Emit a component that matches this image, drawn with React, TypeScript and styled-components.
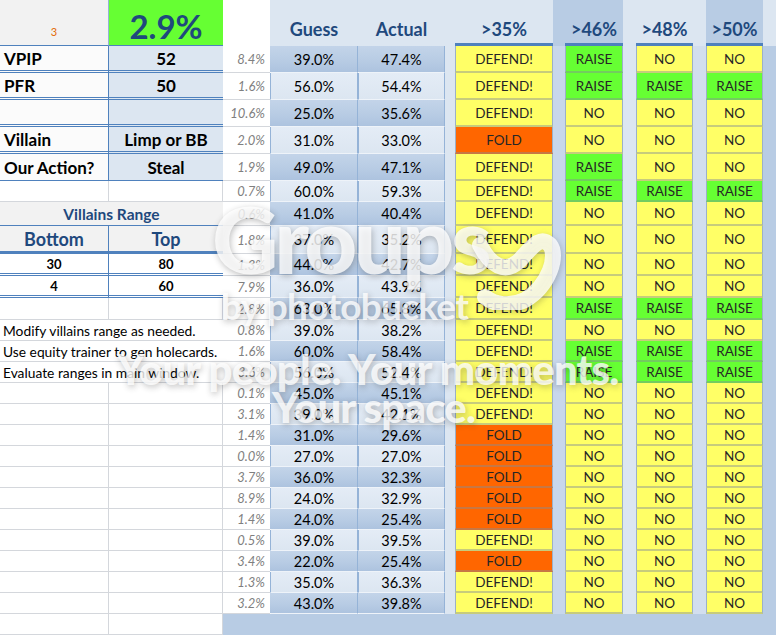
import React from "react";
import styled, { createGlobalStyle, css } from "styled-components";

const colors = {
  navy: "#1f497d",
  accent: "#4f81bd",
  light: "#dce6f1",
  mid: "#b8cce4",
  midSoft: "#c8d7eb",
  edge: "#95b3d7",
  grid: "#d4d7dc",
  paper: "#f2f2f2",
  green: "#66ff33",
  yellow: "#ffff66",
  orange: "#ff6600",
};

const COLUMNS =
  "109px 114px 47px 88px 87px 10px 98px 12px 58px 13px 57px 13px 57px 13px";

type Call = "DEFEND!" | "FOLD" | "RAISE" | "NO";

type Hand = {
  diff: string;
  guess: string;
  actual: string;
  first: Call;
  rest: string; // R = RAISE, N = NO for the three raise columns
};

const hands: Hand[] = [
  { diff: "8.4%", guess: "39.0%", actual: "47.4%", first: "DEFEND!", rest: "RNN" },
  { diff: "1.6%", guess: "56.0%", actual: "54.4%", first: "DEFEND!", rest: "RRR" },
  { diff: "10.6%", guess: "25.0%", actual: "35.6%", first: "DEFEND!", rest: "NNN" },
  { diff: "2.0%", guess: "31.0%", actual: "33.0%", first: "FOLD", rest: "NNN" },
  { diff: "1.9%", guess: "49.0%", actual: "47.1%", first: "DEFEND!", rest: "RNN" },
  { diff: "0.7%", guess: "60.0%", actual: "59.3%", first: "DEFEND!", rest: "RRR" },
  { diff: "0.6%", guess: "41.0%", actual: "40.4%", first: "DEFEND!", rest: "NNN" },
  { diff: "1.8%", guess: "37.0%", actual: "35.2%", first: "DEFEND!", rest: "NNN" },
  { diff: "1.3%", guess: "44.0%", actual: "42.7%", first: "DEFEND!", rest: "NNN" },
  { diff: "7.9%", guess: "36.0%", actual: "43.9%", first: "DEFEND!", rest: "NNN" },
  { diff: "2.8%", guess: "63.0%", actual: "65.8%", first: "DEFEND!", rest: "RRR" },
  { diff: "0.8%", guess: "39.0%", actual: "38.2%", first: "DEFEND!", rest: "NNN" },
  { diff: "1.6%", guess: "60.0%", actual: "58.4%", first: "DEFEND!", rest: "RRR" },
  { diff: "3.6%", guess: "56.0%", actual: "52.4%", first: "DEFEND!", rest: "RRR" },
  { diff: "0.1%", guess: "45.0%", actual: "45.1%", first: "DEFEND!", rest: "NNN" },
  { diff: "3.1%", guess: "39.0%", actual: "42.1%", first: "DEFEND!", rest: "NNN" },
  { diff: "1.4%", guess: "31.0%", actual: "29.6%", first: "FOLD", rest: "NNN" },
  { diff: "0.0%", guess: "27.0%", actual: "27.0%", first: "FOLD", rest: "NNN" },
  { diff: "3.7%", guess: "36.0%", actual: "32.3%", first: "FOLD", rest: "NNN" },
  { diff: "8.9%", guess: "24.0%", actual: "32.9%", first: "FOLD", rest: "NNN" },
  { diff: "1.4%", guess: "24.0%", actual: "25.4%", first: "FOLD", rest: "NNN" },
  { diff: "0.5%", guess: "39.0%", actual: "39.5%", first: "DEFEND!", rest: "NNN" },
  { diff: "3.4%", guess: "22.0%", actual: "25.4%", first: "FOLD", rest: "NNN" },
  { diff: "1.3%", guess: "35.0%", actual: "36.3%", first: "DEFEND!", rest: "NNN" },
  { diff: "3.2%", guess: "43.0%", actual: "39.8%", first: "DEFEND!", rest: "NNN" },
];

const heights = [27, 27, 27, 27, 27, 21, 24, 28, 22, 22, 22, 21, 21, 21, 21, 21, 21, 21, 21, 21, 21, 21, 21, 21, 21];

type Left =
  | { kind: "stat"; label: string; value: string; last?: boolean }
  | { kind: "blank" }
  | { kind: "title"; text: string }
  | { kind: "head"; a: string; b: string }
  | { kind: "range"; a: string; b: string }
  | { kind: "note"; text: string };

const leftSide: Left[] = [
  { kind: "stat", label: "VPIP", value: "52" },
  { kind: "stat", label: "PFR", value: "50" },
  { kind: "stat", label: "", value: "" },
  { kind: "stat", label: "Villain", value: "Limp or BB" },
  { kind: "stat", label: "Our Action?", value: "Steal", last: true },
  { kind: "blank" },
  { kind: "title", text: "Villains Range" },
  { kind: "head", a: "Bottom", b: "Top" },
  { kind: "range", a: "30", b: "80" },
  { kind: "range", a: "4", b: "60" },
  { kind: "blank" },
  { kind: "note", text: "Modify villains range as needed." },
  { kind: "note", text: "Use equity trainer to gen holecards." },
  { kind: "note", text: "Evaluate ranges in main window." },
];

const GlobalStyle = createGlobalStyle`
  html, body {
    margin: 0;
    padding: 0;
    background: #ffffff;
  }
  body {
    font-family: Lato, "Open Sans", "Liberation Sans", sans-serif;
  }
`;

const Sheet = styled.div`
  position: relative;
  width: 776px;
  height: 635px;
  overflow: hidden;
  background: #ffffff;
`;

const Row = styled.div<{ $h: number }>`
  display: grid;
  grid-template-columns: ${COLUMNS};
  height: ${(p) => p.$h}px;
`;

const cell = css`
  box-sizing: border-box;
  display: flex;
  align-items: center;
  min-width: 0;
  overflow: hidden;
  white-space: nowrap;
`;

/* ---------- header ---------- */

const Corner = styled.div`
  ${cell};
  justify-content: center;
  align-items: flex-end;
  padding-bottom: 7px;
  background: ${colors.paper};
  border-bottom: 1px solid ${colors.accent};
  border-right: 1px solid ${colors.edge};
  color: #e46c0a;
  font-size: 11px;
`;

const Headline = styled.div`
  ${cell};
  justify-content: center;
  align-items: flex-end;
  padding-bottom: 2px;
  background: ${colors.green};
  border-bottom: 1px solid ${colors.accent};
  color: ${colors.navy};
  font-size: 33px;
  font-weight: 700;
  line-height: 1;
`;

const HeaderBlank = styled.div`
  ${cell};
  background: #ffffff;
`;

const ColTitle = styled.div<{ $dark?: boolean; $boxed?: boolean }>`
  ${cell};
  justify-content: center;
  align-items: flex-end;
  padding-bottom: ${(p) => (p.$boxed ? 3 : 6)}px;
  background: ${(p) => (p.$dark ? colors.mid : colors.light)};
  border-bottom: ${(p) => (p.$boxed ? `3px solid ${colors.accent}` : "none")};
  color: ${colors.navy};
  font-size: 18px;
  font-weight: 700;
`;

/* ---------- left block ---------- */

const StatLabel = styled.div<{ $last?: boolean }>`
  ${cell};
  padding-left: 4px;
  background: #fbfbfb;
  border-right: 1px solid ${colors.accent};
  border-bottom: ${(p) => (p.$last ? `1px solid ${colors.accent}` : `3px double ${colors.accent}`)};
  color: #000000;
  font-size: 17px;
  font-weight: 700;
`;

const StatValue = styled.div<{ $last?: boolean }>`
  ${cell};
  justify-content: center;
  background: ${colors.light};
  border-bottom: ${(p) => (p.$last ? `1px solid ${colors.accent}` : `3px double ${colors.accent}`)};
  color: #000000;
  font-size: 17px;
  font-weight: 700;
`;

const BlankCell = styled.div`
  ${cell};
  background: #ffffff;
  border-right: 1px solid ${colors.grid};
  border-bottom: 1px solid ${colors.grid};
`;

const RangeTitle = styled.div`
  ${cell};
  grid-column: span 2;
  justify-content: center;
  background: ${colors.paper};
  border-bottom: 1px solid ${colors.accent};
  color: ${colors.navy};
  font-size: 15.5px;
  font-weight: 700;
`;

const RangeHead = styled.div<{ $split?: boolean }>`
  ${cell};
  justify-content: center;
  background: ${colors.paper};
  border-right: ${(p) => (p.$split ? `1px solid ${colors.accent}` : "none")};
  border-bottom: 3px solid ${colors.accent};
  color: ${colors.navy};
  font-size: 18px;
  font-weight: 700;
`;

const RangeValue = styled.div<{ $split?: boolean }>`
  ${cell};
  justify-content: center;
  background: #ffffff;
  border-right: ${(p) => (p.$split ? `1px solid ${colors.accent}` : "none")};
  border-bottom: 3px double ${colors.accent};
  color: #000000;
  font-size: 13px;
  font-weight: 700;
`;

const Note = styled.div`
  ${cell};
  grid-column: span 2;
  padding-left: 3px;
  background: #ffffff;
  border-bottom: 1px solid ${colors.grid};
  color: #000000;
  font-size: 13.8px;
`;

const PctCell = styled.div`
  ${cell};
  justify-content: flex-end;
  padding-right: 5px;
  background: #ffffff;
  border-bottom: 1px solid ${colors.grid};
  color: #7f7f7f;
  font-size: 13px;
  font-style: italic;
`;

/* ---------- right block ---------- */

const GuessCell = styled.div<{ $dark: boolean }>`
  ${cell};
  justify-content: center;
  background: ${(p) =>
    p.$dark
      ? `linear-gradient(#c3d4e9, ${colors.mid} 55%, #adc3df)`
      : `linear-gradient(#e4ecf6, ${colors.light})`};
  border-left: 1px solid ${(p) => (p.$dark ? "transparent" : colors.edge)};
  border-right: 1px solid ${colors.edge};
  border-bottom: 1px solid #eef3f9;
  color: #000000;
  font-size: 14.5px;
`;

const Gap = styled.div<{ $tone: string }>`
  background: ${(p) => p.$tone};
`;

const callColor: Record<Call, string> = {
  "DEFEND!": colors.yellow,
  NO: colors.yellow,
  RAISE: colors.green,
  FOLD: colors.orange,
};

const CallCell = styled.div<{ $call: Call }>`
  ${cell};
  justify-content: center;
  background: ${(p) => callColor[p.$call]};
  border-left: 1px solid #9bb0c8;
  border-right: 1px solid #9bb0c8;
  border-bottom: 2px solid rgba(130, 140, 150, 0.45);
  color: #262626;
  font-size: 13.5px;
`;

const Footer = styled.div`
  grid-column: 3 / -1;
  background: ${colors.mid};
`;

/* ---------- watermark ---------- */

const Watermark = styled.div`
  position: absolute;
  inset: 0;
  pointer-events: none;
  color: rgba(255, 255, 255, 0.8);
  font-family: Lato, "Open Sans", sans-serif;
  font-weight: 900;
  text-shadow: 1px 2px 6px rgba(40, 40, 40, 0.3);
  white-space: nowrap;
`;

const MarkLine = styled.div<{ $size: number; $weight?: number }>`
  position: absolute;
  font-size: ${(p) => p.$size}px;
  font-weight: ${(p) => p.$weight ?? 900};
  line-height: 1;
  letter-spacing: -0.02em;
`;

const Swoosh = styled.svg`
  position: absolute;
  left: 470px;
  top: 215px;
  filter: drop-shadow(1px 2px 3px rgba(40, 40, 40, 0.3));
`;

const toCall = (c: string): Call => (c === "R" ? "RAISE" : "NO");

function LeftCells({ row }: { row?: Left }) {
  if (!row || row.kind === "blank") {
    return (
      <>
        <BlankCell />
        <BlankCell />
      </>
    );
  }
  switch (row.kind) {
    case "stat":
      return (
        <>
          <StatLabel $last={row.last}>{row.label}</StatLabel>
          <StatValue $last={row.last}>{row.value}</StatValue>
        </>
      );
    case "title":
      return <RangeTitle>{row.text}</RangeTitle>;
    case "head":
      return (
        <>
          <RangeHead $split>{row.a}</RangeHead>
          <RangeHead>{row.b}</RangeHead>
        </>
      );
    case "range":
      return (
        <>
          <RangeValue $split>{row.a}</RangeValue>
          <RangeValue>{row.b}</RangeValue>
        </>
      );
    case "note":
      return <Note>{row.text}</Note>;
  }
}

export default function App() {
  return (
    <>
      <GlobalStyle />
      <Sheet>
        <Row $h={46}>
          <Corner>3</Corner>
          <Headline>2.9%</Headline>
          <HeaderBlank />
          <ColTitle>Guess</ColTitle>
          <ColTitle>Actual</ColTitle>
          <ColTitle />
          <ColTitle $boxed>&gt;35%</ColTitle>
          <ColTitle $dark />
          <ColTitle $dark $boxed>&gt;46%</ColTitle>
          <ColTitle />
          <ColTitle $boxed>&gt;48%</ColTitle>
          <ColTitle />
          <ColTitle $dark $boxed>&gt;50%</ColTitle>
          <ColTitle />
        </Row>

        {hands.map((hand, i) => {
          const dark = i % 2 === 0;
          const [a, b, c] = hand.rest.split("").map(toCall);
          return (
            <Row key={i} $h={heights[i]}>
              <LeftCells row={leftSide[i]} />
              <PctCell>{hand.diff}</PctCell>
              <GuessCell $dark={dark}>{hand.guess}</GuessCell>
              <GuessCell $dark={dark}>{hand.actual}</GuessCell>
              <Gap $tone={colors.light} />
              <CallCell $call={hand.first}>{hand.first}</CallCell>
              <Gap $tone={colors.midSoft} />
              <CallCell $call={a}>{a}</CallCell>
              <Gap $tone={colors.light} />
              <CallCell $call={b}>{b}</CallCell>
              <Gap $tone="#d2deee" />
              <CallCell $call={c}>{c}</CallCell>
              <Gap $tone={colors.mid} />
            </Row>
          );
        })}

        <Row $h={21}>
          <BlankCell />
          <BlankCell />
          <Footer />
        </Row>

        <Watermark>
          <MarkLine $size={92} style={{ left: 212, top: 193, letterSpacing: "-0.04em" }}>Groups</MarkLine>
          <Swoosh width="95" height="95" viewBox="0 0 95 95">
            <path
              d="M10 30 C 20 50, 35 60, 50 45 C 62 32, 70 20, 80 30 C 88 40, 80 70, 55 85 C 40 92, 25 90, 15 82"
              fill="none"
              stroke="rgba(255,255,255,0.8)"
              strokeWidth="16"
              strokeLinecap="round"
            />
          </Swoosh>
          <MarkLine $size={37} $weight={700} style={{ left: 221, top: 287 }}>by photobucket</MarkLine>
          <MarkLine $size={42} style={{ left: 117, top: 348 }}>Your people. Your moments.</MarkLine>
          <MarkLine $size={42} style={{ left: 272, top: 386 }}>Your space.</MarkLine>
        </Watermark>
      </Sheet>
    </>
  );
}
